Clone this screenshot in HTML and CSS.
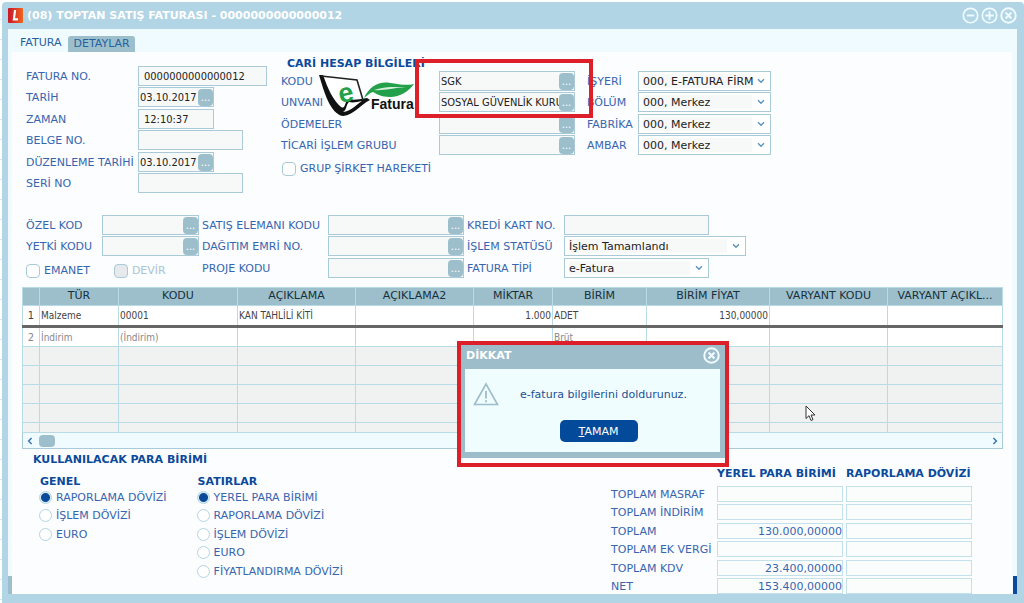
FILE: index.html
```html
<!DOCTYPE html>
<html lang="tr">
<head>
<meta charset="utf-8">
<title>(08) TOPTAN SATIŞ FATURASI</title>
<link rel="stylesheet" href="styles.css">
</head>
<body>
<svg class="sprite" aria-hidden="true">
  <symbol id="chevron" viewBox="0 0 8 6"><path d="M1 1.2 4 4.2 7 1.2" fill="none" stroke="#5b93bd" stroke-width="1.4"/></symbol>
  <symbol id="close" viewBox="0 0 16 16"><circle cx="8" cy="8" r="6.8" fill="none" stroke="currentColor" stroke-width="1.9"/><path d="M5.2 5.2l5.6 5.6M10.8 5.2l-5.6 5.6" stroke="currentColor" stroke-width="2"/></symbol>
</svg>

<main class="window">
  <header class="titlebar">
    <svg class="app-icon" viewBox="0 0 16 16" aria-hidden="true">
      <defs><linearGradient id="lg"><stop offset="0" stop-color="#c9152b"/><stop offset="1" stop-color="#f0641e"/></linearGradient></defs>
      <rect width="16" height="16" rx="1" fill="url(#lg)"/>
      <path d="M6.4 2.2h2.3L7.6 11h3.2l-.4 2.2H5z" fill="#fff"/>
    </svg>
    <h1 class="title">(08) TOPTAN SATIŞ FATURASI - 0000000000000012</h1>
    <div class="window-buttons">
      <button type="button" class="icon-button" aria-label="Küçült"><svg viewBox="0 0 16 16"><circle cx="8" cy="8" r="6.8" fill="none" stroke="currentColor" stroke-width="1.6"/><path d="M4.500 8h7" stroke="currentColor" stroke-width="1.8"/></svg></button>
      <button type="button" class="icon-button" aria-label="Büyüt"><svg viewBox="0 0 16 16"><circle cx="8" cy="8" r="6.8" fill="none" stroke="currentColor" stroke-width="1.6"/><path d="M4 8h8M8 4v8" stroke="currentColor" stroke-width="1.8"/></svg></button>
      <button type="button" class="icon-button" aria-label="Kapat"><svg><use href="#close"/></svg></button>
    </div>
  </header>

  <div class="client">
    <nav class="tabs">
      <button type="button" class="tab tab-active">FATURA</button>
      <button type="button" class="tab">DETAYLAR</button>
    </nav>

    <div class="panel">
      <section class="top-form">
        <div class="rows invoice">
          <label for="no">FATURA NO.</label><input id="no" class="field padded w-full" value="0000000000000012">
          <label for="tarih">TARİH</label><span class="lookup w-small"><input id="tarih" value="03.10.2017"><button type="button" aria-label="Tarih seç">...</button></span>
          <label for="zaman">ZAMAN</label><input id="zaman" class="field padded w-small" value="12:10:37">
          <label for="belge">BELGE NO.</label><input id="belge" class="field w-mid">
          <label for="duz">DÜZENLEME TARİHİ</label><span class="lookup w-small"><input id="duz" value="03.10.2017"><button type="button" aria-label="Tarih seç">...</button></span>
          <label for="seri">SERİ NO</label><input id="seri" class="field w-mid">
        </div>

        <div class="account">
          <h2 class="heading account-title">CARİ HESAP BİLGİLERİ</h2>
          <div class="rows account-rows">
            <label for="kodu">KODU</label><span class="lookup"><input id="kodu" value="SGK"><button type="button" aria-label="Kod seç">...</button></span>
            <label for="unvan">UNVANI</label><span class="lookup"><input id="unvan" value="SOSYAL GÜVENLİK KURUMU"><button type="button" aria-label="Unvan seç">...</button></span>
            <label for="odeme">ÖDEMELER</label><span class="lookup"><input id="odeme"><button type="button" aria-label="Ödeme seç">...</button></span>
            <label for="grup">TİCARİ İŞLEM GRUBU</label><span class="lookup"><input id="grup"><button type="button" aria-label="Grup seç">...</button></span>
            <label class="check both"><input type="checkbox">GRUP ŞİRKET HAREKETİ</label>
          </div>
          <svg class="efatura" viewBox="0 0 98 44" role="img" aria-label="e-Fatura">
            <path d="M1 1 38 4 44 24 31 37C18 40 8 18 1 1z" fill="#fff"/>
            <path d="M0 0h4c5 14 10 25 18 32 5 3 3-6 8-8 3 1 8 1 18-1l3 2c-10 5-16 15-27 16C11 39 5 16 0 0z" fill="#111"/>
            <path d="M24 37c4-2 3-8 6-10 4 1 8 0 13-1-6 4-11 10-19 11z" fill="#fff"/>
            <path d="M2 1l36 4 6 20" fill="none" stroke="#222" stroke-width="1.6"/>
            <text x="20" y="27" class="logo-e" transform="rotate(-12 26 22)">e</text>
            <path d="M45 23C50 12 60 6 71 8c9 1 15 3 24 1-5 7-14 13-24 13-9 0-13-3-17-5-4 1-6 4-9 6z" fill="#23a04a"/>
            <path d="M55 15c9 1 18-2 32-3-11 0-20-1-32 3z" fill="#d5efdb"/>
            <text x="52" y="34" class="logo-text">Fatura</text>
          </svg>
          <div class="mark mark-account"></div>
        </div>

        <div class="rows places">
          <label for="isyeri">İŞYERİ</label><span class="drop"><select id="isyeri"><option>000, E-FATURA FİRMASI</option></select><svg><use href="#chevron"/></svg></span>
          <label for="bolum">BÖLÜM</label><span class="drop"><select id="bolum"><option>000, Merkez</option></select><svg><use href="#chevron"/></svg></span>
          <label for="fabrika">FABRİKA</label><span class="drop"><select id="fabrika"><option>000, Merkez</option></select><svg><use href="#chevron"/></svg></span>
          <label for="ambar">AMBAR</label><span class="drop"><select id="ambar"><option>000, Merkez</option></select><svg><use href="#chevron"/></svg></span>
        </div>
      </section>

      <section class="rows codes">
        <label for="ozel">ÖZEL KOD</label><span class="lookup w-code"><input id="ozel"><button type="button" aria-label="Özel kod seç">...</button></span>
        <label for="satis">SATIŞ ELEMANI KODU</label><span class="lookup w-lookup"><input id="satis"><button type="button" aria-label="Satış elemanı seç">...</button></span>
        <label for="kredi">KREDİ KART NO.</label><input id="kredi" class="field w-card">

        <label for="yetki">YETKİ KODU</label><span class="lookup w-code"><input id="yetki"><button type="button" aria-label="Yetki kodu seç">...</button></span>
        <label for="dagitim">DAĞITIM EMRİ NO.</label><span class="lookup w-lookup"><input id="dagitim"><button type="button" aria-label="Dağıtım emri seç">...</button></span>
        <label for="statu">İŞLEM STATÜSÜ</label><span class="drop w-status"><select id="statu"><option>İşlem Tamamlandı</option></select><svg><use href="#chevron"/></svg></span>

        <div class="both flags"><label class="check"><input type="checkbox">EMANET</label><label class="check off"><input type="checkbox" disabled>DEVİR</label></div>
        <label for="proje">PROJE KODU</label><span class="lookup w-lookup"><input id="proje"><button type="button" aria-label="Proje seç">...</button></span>
        <label for="tip">FATURA TİPİ</label><span class="drop w-card"><select id="tip"><option>e-Fatura</option></select><svg><use href="#chevron"/></svg></span>
      </section>

      <section class="lines">
        <table class="grid">
          <colgroup><col class="c-no"><col class="c-type"><col class="c-code"><col class="c-text"><col class="c-text"><col class="c-qty"><col class="c-unit"><col class="c-price"><col class="c-text"><col></colgroup>
          <thead><tr><th></th><th>TÜR</th><th>KODU</th><th>AÇIKLAMA</th><th>AÇIKLAMA2</th><th>MİKTAR</th><th>BİRİM</th><th>BİRİM FİYAT</th><th>VARYANT KODU</th><th>VARYANT AÇIKL...</th></tr></thead>
          <tbody>
            <tr class="current"><td class="num">1</td><td>Malzeme</td><td>00001</td><td>KAN TAHLİLİ KİTİ</td><td></td><td class="right">1.000</td><td>ADET</td><td class="right">130,00000</td><td></td><td></td></tr>
            <tr class="draft"><td class="num">2</td><td>İndirim</td><td>(İndirim)</td><td></td><td></td><td></td><td>Brüt</td><td></td><td></td><td></td></tr>
            <tr class="empty"><td></td><td></td><td></td><td></td><td></td><td></td><td></td><td></td><td></td><td></td></tr>
            <tr class="empty"><td></td><td></td><td></td><td></td><td></td><td></td><td></td><td></td><td></td><td></td></tr>
            <tr class="empty"><td></td><td></td><td></td><td></td><td></td><td></td><td></td><td></td><td></td><td></td></tr>
            <tr class="empty"><td></td><td></td><td></td><td></td><td></td><td></td><td></td><td></td><td></td><td></td></tr>
            <tr class="empty last"><td></td><td></td><td></td><td></td><td></td><td></td><td></td><td></td><td></td><td></td></tr>
          </tbody>
        </table>
        <div class="scrollbar">
          <button type="button" aria-label="Sola kaydır"><svg viewBox="0 0 6 8"><path d="M4.6 1 1.6 4l3 3" fill="none" stroke="#3b78ae" stroke-width="1.5"/></svg></button>
          <span class="thumb"></span>
          <button type="button" class="to-end" aria-label="Sağa kaydır"><svg viewBox="0 0 6 8"><path d="M1.4 1l3 3-3 3" fill="none" stroke="#3b78ae" stroke-width="1.5"/></svg></button>
        </div>
      </section>

      <section class="bottom">
        <div class="currency">
          <h2 class="heading">KULLANILACAK PARA BİRİMİ</h2>
          <div class="groups">
            <div class="group" role="radiogroup" aria-labelledby="g1">
              <h3 id="g1" class="heading group-title">GENEL</h3>
              <label class="radio"><input type="radio" name="genel" checked>RAPORLAMA DÖVİZİ</label>
              <label class="radio"><input type="radio" name="genel">İŞLEM DÖVİZİ</label>
              <label class="radio"><input type="radio" name="genel">EURO</label>
            </div>
            <div class="group" role="radiogroup" aria-labelledby="g2">
              <h3 id="g2" class="heading group-title">SATIRLAR</h3>
              <label class="radio"><input type="radio" name="satir" checked>YEREL PARA BİRİMİ</label>
              <label class="radio"><input type="radio" name="satir">RAPORLAMA DÖVİZİ</label>
              <label class="radio"><input type="radio" name="satir">İŞLEM DÖVİZİ</label>
              <label class="radio"><input type="radio" name="satir">EURO</label>
              <label class="radio"><input type="radio" name="satir">FİYATLANDIRMA DÖVİZİ</label>
            </div>
          </div>
        </div>

        <div class="totals">
          <span></span><h3 class="heading">YEREL PARA BİRİMİ</h3><h3 class="heading">RAPORLAMA DÖVİZİ</h3>
          <label for="t1">TOPLAM MASRAF</label><input id="t1" readonly><input aria-label="Toplam masraf, raporlama dövizi" readonly>
          <label for="t2">TOPLAM İNDİRİM</label><input id="t2" readonly><input aria-label="Toplam indirim, raporlama dövizi" readonly>
          <label for="t3">TOPLAM</label><input id="t3" value="130.000,00000" readonly><input aria-label="Toplam, raporlama dövizi" readonly>
          <label for="t4">TOPLAM EK VERGİ</label><input id="t4" readonly><input aria-label="Toplam ek vergi, raporlama dövizi" readonly>
          <label for="t5">TOPLAM KDV</label><input id="t5" value="23.400,00000" readonly><input aria-label="Toplam KDV, raporlama dövizi" readonly>
          <label for="t6">NET</label><input id="t6" value="153.400,00000" readonly><input aria-label="Net, raporlama dövizi" readonly>
        </div>
      </section>
    </div>
    <span class="edge edge-left"></span>
    <span class="edge edge-right"></span>
  </div>

  <div class="mark mark-dialog">
    <div class="dialog" role="alertdialog" aria-labelledby="dlg-title">
      <div class="dialog-head">
        <h2 id="dlg-title" class="title">DİKKAT</h2>
        <button type="button" class="icon-button" aria-label="Kapat"><svg><use href="#close"/></svg></button>
      </div>
      <div class="dialog-body">
        <div class="message">
          <svg class="warning" viewBox="0 0 26 24" aria-hidden="true"><path d="M13 2 24.500 22.500h-23z" fill="none" stroke="#9dbdca" stroke-width="1.6"/><path d="M13 9v7.500M13 18.200v2" stroke="#9dbdca" stroke-width="1.800"/></svg>
          <p>e-fatura bilgilerini doldurunuz.</p>
        </div>
        <button type="button" class="ok"><u>T</u>AMAM</button>
      </div>
    </div>
  </div>

  <svg class="pointer" viewBox="0 0 11 17" aria-hidden="true"><path d="M1 1v12.500l3-2.800 2 4.800 2-.9-2-4.600h4z" fill="#fff" stroke="#333" stroke-width="1"/></svg>
</main>
</body>
</html>
```
FILE: styles.css
```css
* { box-sizing: border-box; }

body {
  margin: 0;
  padding: 2px 0 0 2px;
  background: #fff repeating-linear-gradient(#fff 0 19px, #d5e7ee 19px 20px);
  font: 11px/15px "DejaVu Sans", Verdana, sans-serif;
  color: #3766ae;
}

h1, h2, h3, p { margin: 0; }
input, select, button { font: inherit; color: inherit; margin: 0; padding: 0; border: 0; }
.sprite { display: none; }

.window {
  position: relative;
  padding: 0 7px 9px 6px;
  background: #b1d5e5;
  border-radius: 4px 4px 0 0;
}

.titlebar { display: flex; align-items: center; gap: 4px; height: 27px; }
.app-icon { width: 15px; height: 15px; }
.title { flex: 1; font-size: 11px; line-height: 15px; font-weight: bold; color: #fff; }
.window-buttons { display: flex; gap: 2px; }
.icon-button { display: block; width: 17px; height: 17px; background: none; color: #f0fbff; }
.icon-button svg { display: block; width: 17px; height: 17px; }

.client { position: relative; padding: 0 5px 0 4px; background: #effbff; }
.tabs { display: flex; align-items: flex-end; height: 23px; padding-left: 2px; }
.tab { height: 16px; padding: 0 5px; background: #9dbfcc; border-radius: 3px 3px 0 0; color: #285f9f; line-height: 16px; }
.tab-active { height: 18px; background: none; padding: 0 7px 0 6px; }

.panel { padding: 4px 9px 0 10px; background: #fcfdfe; }

.rows { display: grid; grid-template-rows: repeat(3, 21px 22px); align-items: start; white-space: nowrap; }
.rows label { line-height: 22px; }
.both { grid-column: span 2; }

.field, .lookup, .drop { height: 20px; border: 1px solid #a9cad6; background: #f7f8f8; }
.field, .lookup input { font-family: "DejaVu Sans Condensed", Tahoma, sans-serif; color: #222; }
.padded { padding: 0 5px; }
.lookup { display: flex; align-items: center; }
.lookup input { flex: 1; min-width: 0; width: 0; padding-left: 1px; background: none; }
.lookup button { width: 15px; height: 17px; background: #9dbfcc; border-radius: 4px; color: #fff; font-size: 10px; line-height: 15px; }

.drop { display: grid; align-items: center; background: linear-gradient(#f7f8f8, #f7f8f8) 4px 2px / calc(100% - 22px) 14px no-repeat #fff; }
.drop select { grid-area: 1 / 1; width: calc(100% - 17px); padding-left: 4px; appearance: none; background: none; color: #222; text-overflow: clip; }
.drop svg { grid-area: 1 / 1; justify-self: end; width: 8px; height: 6px; margin-right: 5px; pointer-events: none; }

.w-full { width: 129px; }
.w-small { width: 76px; }
.w-mid { width: 105px; }
.w-code { width: 97px; }
.w-lookup { width: 136px; }
.w-card { width: 145px; }
.w-status { width: 182px; }

.top-form { display: flex; padding-left: 4px; }
.invoice { grid-template-columns: 112px 143px; padding-top: 10px; }
.heading { font-size: 11px; line-height: 15px; font-weight: bold; color: #0b4a9b; white-space: nowrap; }
.account { position: relative; }
.account-title { padding-left: 6px; }
.account-rows { grid-template-columns: 158px 136px; }
.places { grid-template-columns: 51px 133px; padding: 15px 0 0 12px; }

.check { display: flex; align-items: center; gap: 4px; }
.check input { appearance: none; width: 14px; height: 14px; border: 1px solid #a9cad6; border-radius: 4px; background: #fff; }
.account .check { padding: 1px 0 0 1px; }
.off { color: #a9c3d3; }
.off input { background: #e6eaec; }
.flags { display: flex; gap: 24px; padding-top: 2px; }

.efatura { position: absolute; left: 38px; top: 19px; width: 98px; height: 44px; }
.logo-e { font: bold 27px "Liberation Sans", Arial, sans-serif; fill: #23a04a; }
.logo-text { font: bold 14px "Liberation Sans", Arial, sans-serif; fill: #111; }

.codes { grid-template-rows: 21px 22px 21px; grid-template-columns: 76px 100px 126px 139px 97px auto; padding: 15px 0 0 4px; }

.lines { margin-top: 8px; }
.grid { width: 100%; table-layout: fixed; border-collapse: collapse; background: #fff; }
.c-no { width: 17px; }
.c-type { width: 79px; }
.c-code { width: 119px; }
.c-text { width: 118px; }
.c-qty { width: 79px; }
.c-unit { width: 94px; }
.c-price { width: 123px; }
.grid th, .grid td { padding: 0 1px; border: 1px solid #b9dbe6; white-space: nowrap; overflow: hidden; }
.grid th { height: 18px; background: #9dbfcc; color: #16303c; font-weight: normal; line-height: 15px; vertical-align: top; }
.grid td { height: 20px; text-align: left; font-family: "DejaVu Sans Condensed", Tahoma, sans-serif; font-size: 10px; color: #444; }
.grid .num { text-align: center; font-size: 11px; }
.grid .right { text-align: right; }
.grid .current td { height: 21px; border-bottom: 3px solid #666; }
.grid .draft td { color: #888; }
.grid .empty td { height: 19px; background: #f0f1f1; }
.grid .last td { height: 10px; }

.scrollbar { display: flex; align-items: center; height: 16px; padding: 0 4px; border: 1px solid #a9cad6; border-top: 0; background: #effbff; }
.scrollbar button { width: 6px; height: 8px; background: none; }
.scrollbar svg { display: block; width: 6px; height: 8px; }
.thumb { width: 16px; height: 12px; margin-left: 6px; border-radius: 4px; background: #9dbfcc; }
.scrollbar .to-end { margin-left: auto; }

.bottom { display: flex; justify-content: space-between; align-items: flex-start; padding-top: 3px; }
.currency { padding-left: 11px; }
.groups { display: flex; gap: 30px; padding: 7px 0 0 6px; }
.group { display: grid; grid-template-rows: 14px 18px 19px 18px 19px 18px; }
.group-title { padding-left: 1px; }
.radio { display: flex; align-items: center; gap: 4px; white-space: nowrap; }
.radio input { appearance: none; width: 13px; height: 13px; border: 1px solid #b5d5df; border-radius: 50%; background: #fff; }
.radio input:checked { background: radial-gradient(circle, #0b4a9b 0 4px, #d5ecf4 5px); }

.totals { display: grid; grid-template-columns: 103px 126px 126px; grid-template-rows: 20px 18px 19px 18px 19px 18px 16px; column-gap: 3px; margin-right: 31px; padding-top: 14px; white-space: nowrap; }
.totals label { line-height: 17px; margin-right: -3px; }
.totals input { width: 100%; height: 16px; border: 1px solid #c3e1ea; background: #fbfdfd; text-align: right; }

.edge { position: absolute; bottom: 0; width: 4px; height: 18px; }
.edge-left { left: 0; background: #9dbfcc; }
.edge-right { right: 0; background: #0b4a9b; }

.mark { position: absolute; border: 4px solid #dc1f28; }
.mark-account { left: 134px; top: 3px; width: 178px; height: 59px; pointer-events: none; }
.mark-dialog { left: 455px; top: 339px; width: 272px; background: #fcfdfe; padding-bottom: 5px; }
.dialog { padding: 0 5px 6px 4px; background: #9dbdca; }
.dialog-head { display: flex; align-items: center; height: 24px; padding: 0 0 4px 1px; }
.dialog-body { padding: 13px 8px 10px; background: #effdff; text-align: center; }
.message { display: flex; align-items: center; gap: 21px; color: #1d4f93; }
.warning { width: 26px; height: 24px; }
.ok { width: 78px; height: 22px; margin: 14px 0 0 12px; border-radius: 5px; background: #044a9a; color: #fff; vertical-align: top; }

.pointer { position: absolute; left: 803px; top: 403px; width: 11px; height: 17px; }
```
